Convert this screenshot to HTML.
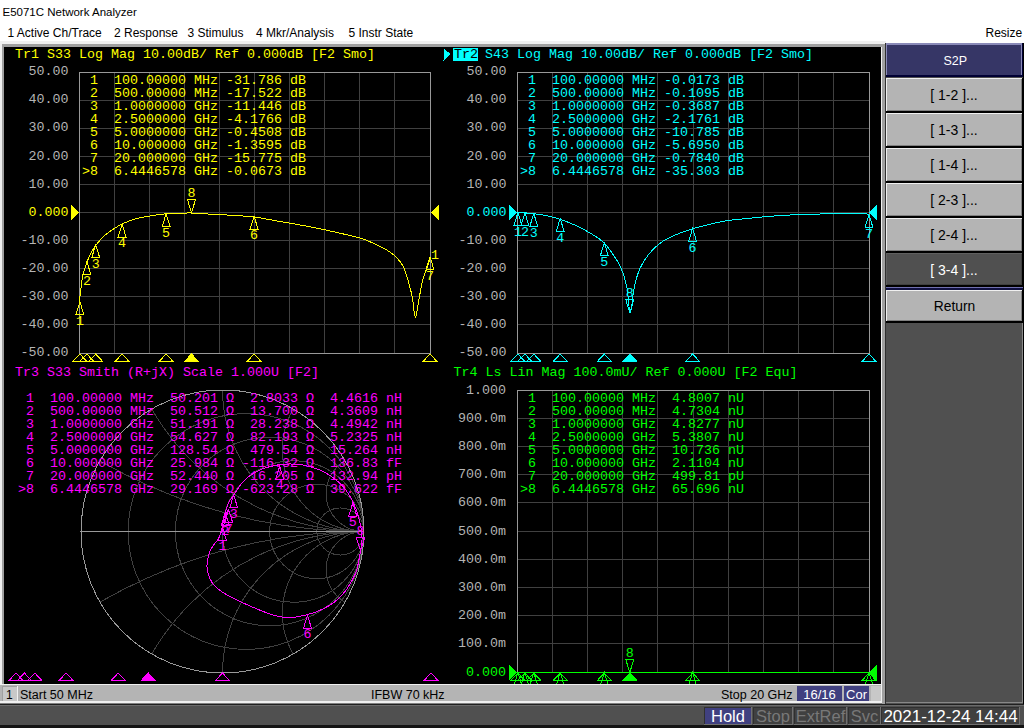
<!DOCTYPE html><html><head><meta charset="utf-8"><style>html,body{margin:0;padding:0;width:1024px;height:728px;overflow:hidden;background:#fff}svg{display:block}</style></head><body><svg width="1024" height="728" viewBox="0 0 1024 728" shape-rendering="crispEdges"><rect x="0" y="0" width="1024" height="728" fill="#ffffff"/>
<text x="2.5" y="16" font-family="Liberation Sans" font-size="11.5" fill="#000">E5071C Network Analyzer</text>
<text x="7.5" y="36.5" font-family="Liberation Sans" font-size="12" fill="#000">1 Active Ch/Trace</text>
<text x="114" y="36.5" font-family="Liberation Sans" font-size="12" fill="#000">2 Response</text>
<text x="187.5" y="36.5" font-family="Liberation Sans" font-size="12" fill="#000">3 Stimulus</text>
<text x="256" y="36.5" font-family="Liberation Sans" font-size="12" fill="#000">4 Mkr/Analysis</text>
<text x="348.5" y="36.5" font-family="Liberation Sans" font-size="12" fill="#000">5 Instr State</text>
<text x="985.5" y="36.5" font-family="Liberation Sans" font-size="12" fill="#000">Resize</text>
<rect x="0" y="41" width="886" height="663" fill="#f0f0f0"/>
<rect x="2" y="44" width="883" height="660" fill="#a0a0a0"/>
<rect x="4" y="47" width="877" height="637" fill="#000000"/>
<rect x="881" y="47" width="1" height="637" fill="#f0f0f0"/>
<rect x="885" y="41" width="1" height="663" fill="#303030"/>
<text x="15" y="58" font-family="Liberation Mono" font-size="13.33" fill="#ffff00">Tr1 S33 Log Mag 10.00dB/ Ref 0.000dB [F2 Smo]</text>
<line x1="114.5" y1="72" x2="114.5" y2="353" stroke="#404040"/>
<line x1="149.5" y1="72" x2="149.5" y2="353" stroke="#404040"/>
<line x1="184.5" y1="72" x2="184.5" y2="353" stroke="#404040"/>
<line x1="219.5" y1="72" x2="219.5" y2="353" stroke="#404040"/>
<line x1="254.5" y1="72" x2="254.5" y2="353" stroke="#404040"/>
<line x1="289.5" y1="72" x2="289.5" y2="353" stroke="#404040"/>
<line x1="324.5" y1="72" x2="324.5" y2="353" stroke="#404040"/>
<line x1="359.5" y1="72" x2="359.5" y2="353" stroke="#404040"/>
<line x1="394.5" y1="72" x2="394.5" y2="353" stroke="#404040"/>
<line x1="79" y1="100.5" x2="430" y2="100.5" stroke="#404040"/>
<line x1="79" y1="128.5" x2="430" y2="128.5" stroke="#404040"/>
<line x1="79" y1="156.5" x2="430" y2="156.5" stroke="#404040"/>
<line x1="79" y1="184.5" x2="430" y2="184.5" stroke="#404040"/>
<line x1="79" y1="212.5" x2="430" y2="212.5" stroke="#404040"/>
<line x1="79" y1="240.5" x2="430" y2="240.5" stroke="#404040"/>
<line x1="79" y1="268.5" x2="430" y2="268.5" stroke="#404040"/>
<line x1="79" y1="296.5" x2="430" y2="296.5" stroke="#404040"/>
<line x1="79" y1="324.5" x2="430" y2="324.5" stroke="#404040"/>
<rect x="79.5" y="72.5" width="351" height="281" fill="none" stroke="#999999"/>
<text x="68.5" y="75.2" font-family="Liberation Mono" font-size="13.33" fill="#b4b4b4" text-anchor="end">50.00</text>
<text x="68.5" y="103.3" font-family="Liberation Mono" font-size="13.33" fill="#b4b4b4" text-anchor="end">40.00</text>
<text x="68.5" y="131.4" font-family="Liberation Mono" font-size="13.33" fill="#b4b4b4" text-anchor="end">30.00</text>
<text x="68.5" y="159.5" font-family="Liberation Mono" font-size="13.33" fill="#b4b4b4" text-anchor="end">20.00</text>
<text x="68.5" y="187.6" font-family="Liberation Mono" font-size="13.33" fill="#b4b4b4" text-anchor="end">10.00</text>
<text x="68.5" y="215.7" font-family="Liberation Mono" font-size="13.33" fill="#ffff00" text-anchor="end">0.000</text>
<text x="68.5" y="243.8" font-family="Liberation Mono" font-size="13.33" fill="#b4b4b4" text-anchor="end">-10.00</text>
<text x="68.5" y="271.9" font-family="Liberation Mono" font-size="13.33" fill="#b4b4b4" text-anchor="end">-20.00</text>
<text x="68.5" y="300.0" font-family="Liberation Mono" font-size="13.33" fill="#b4b4b4" text-anchor="end">-30.00</text>
<text x="68.5" y="328.1" font-family="Liberation Mono" font-size="13.33" fill="#b4b4b4" text-anchor="end">-40.00</text>
<text x="68.5" y="356.2" font-family="Liberation Mono" font-size="13.33" fill="#b4b4b4" text-anchor="end">-50.00</text>
<text x="82" y="84" font-family="Liberation Mono" font-size="13.33" fill="#ffff00" xml:space="preserve"> 1  100.00000 MHz -31.786 dB</text>
<text x="82" y="97" font-family="Liberation Mono" font-size="13.33" fill="#ffff00" xml:space="preserve"> 2  500.00000 MHz -17.522 dB</text>
<text x="82" y="110" font-family="Liberation Mono" font-size="13.33" fill="#ffff00" xml:space="preserve"> 3  1.0000000 GHz -11.446 dB</text>
<text x="82" y="123" font-family="Liberation Mono" font-size="13.33" fill="#ffff00" xml:space="preserve"> 4  2.5000000 GHz -4.1766 dB</text>
<text x="82" y="136" font-family="Liberation Mono" font-size="13.33" fill="#ffff00" xml:space="preserve"> 5  5.0000000 GHz -0.4508 dB</text>
<text x="82" y="149" font-family="Liberation Mono" font-size="13.33" fill="#ffff00" xml:space="preserve"> 6  10.000000 GHz -1.3595 dB</text>
<text x="82" y="162" font-family="Liberation Mono" font-size="13.33" fill="#ffff00" xml:space="preserve"> 7  20.000000 GHz -15.775 dB</text>
<text x="82" y="175" font-family="Liberation Mono" font-size="13.33" fill="#ffff00" xml:space="preserve">&gt;8  6.4446578 GHz -0.0673 dB</text>
<path d="M79.50 303.00 C79.58 301.83 79.75 298.50 80.00 296.00 C80.25 293.50 80.67 290.67 81.00 288.00 C81.33 285.33 81.50 282.83 82.00 280.00 C82.50 277.17 83.17 274.00 84.00 271.00 C84.83 268.00 85.83 265.00 87.00 262.00 C88.17 259.00 89.50 255.83 91.00 253.00 C92.50 250.17 93.83 247.83 96.00 245.00 C98.17 242.17 101.33 238.50 104.00 236.00 C106.67 233.50 109.00 232.00 112.00 230.00 C115.00 228.00 118.17 225.83 122.00 224.00 C125.83 222.17 130.33 220.33 135.00 219.00 C139.67 217.67 144.83 216.87 150.00 216.00 C155.17 215.13 161.00 214.25 166.00 213.80 C171.00 213.35 175.75 213.43 180.00 213.30 C184.25 213.17 186.55 212.87 191.50 213.00 C196.45 213.13 203.28 213.73 209.70 214.10 C216.12 214.47 222.58 214.73 230.00 215.20 C237.42 215.67 248.20 216.27 254.20 216.90 C260.20 217.53 260.13 217.97 266.00 219.00 C271.87 220.03 281.60 221.72 289.40 223.10 C297.20 224.48 304.47 225.63 312.80 227.30 C321.13 228.97 331.37 231.27 339.40 233.10 C347.43 234.93 354.90 236.40 361.00 238.30 C367.10 240.20 371.83 242.63 376.00 244.50 C380.17 246.37 382.67 247.42 386.00 249.50 C389.33 251.58 393.08 254.08 396.00 257.00 C398.92 259.92 401.42 262.83 403.50 267.00 C405.58 271.17 407.04 277.00 408.50 282.00 C409.96 287.00 411.12 291.17 412.25 297.00 C413.38 302.83 414.21 316.17 415.25 317.00 C416.29 317.83 417.33 307.83 418.50 302.00 C419.67 296.17 420.79 287.83 422.25 282.00 C423.71 276.17 425.92 271.00 427.25 267.00 C428.58 263.00 429.75 259.50 430.25 258.00" fill="none" stroke="#ffff00"/>
<path d="M79.9 301.8 L75.9 314.8 L83.9 314.8 Z" fill="none" stroke="#ffff00"/>
<text x="79.9" y="324.8" font-family="Liberation Mono" font-size="13.33" fill="#ffff00" text-anchor="middle">1</text>
<path d="M86.9 261.7 L82.9 274.7 L90.9 274.7 Z" fill="none" stroke="#ffff00"/>
<text x="86.9" y="284.7" font-family="Liberation Mono" font-size="13.33" fill="#ffff00" text-anchor="middle">2</text>
<path d="M95.7 244.7 L91.7 257.7 L99.7 257.7 Z" fill="none" stroke="#ffff00"/>
<text x="95.7" y="267.7" font-family="Liberation Mono" font-size="13.33" fill="#ffff00" text-anchor="middle">3</text>
<path d="M122.1 224.2 L118.1 237.2 L126.1 237.2 Z" fill="none" stroke="#ffff00"/>
<text x="122.1" y="247.2" font-family="Liberation Mono" font-size="13.33" fill="#ffff00" text-anchor="middle">4</text>
<path d="M166.1 213.8 L162.1 226.8 L170.1 226.8 Z" fill="none" stroke="#ffff00"/>
<text x="166.1" y="236.8" font-family="Liberation Mono" font-size="13.33" fill="#ffff00" text-anchor="middle">5</text>
<path d="M254.1 216.3 L250.1 229.3 L258.1 229.3 Z" fill="none" stroke="#ffff00"/>
<text x="254.1" y="239.3" font-family="Liberation Mono" font-size="13.33" fill="#ffff00" text-anchor="middle">6</text>
<path d="M430.0 256.8 L426.0 269.8 L434.0 269.8 Z" fill="none" stroke="#ffff00"/>
<text x="430.0" y="279.8" font-family="Liberation Mono" font-size="13.33" fill="#ffff00" text-anchor="middle">7</text>
<path d="M191.5 212.7 L187.5 199.7 L195.5 199.7 Z" fill="none" stroke="#ffff00"/>
<text x="191.5" y="196.7" font-family="Liberation Mono" font-size="13.33" fill="#ffff00" text-anchor="middle">8</text>
<text x="435" y="259" font-family="Liberation Mono" font-size="13.33" fill="#ffff00" text-anchor="middle">1</text>
<path d="M79.9 354.0 L72.9 361.5 L86.9 361.5 Z" fill="none" stroke="#ffff00"/>
<path d="M86.9 354.0 L79.9 361.5 L93.9 361.5 Z" fill="none" stroke="#ffff00"/>
<path d="M95.7 354.0 L88.7 361.5 L102.7 361.5 Z" fill="none" stroke="#ffff00"/>
<path d="M122.1 354.0 L115.1 361.5 L129.1 361.5 Z" fill="none" stroke="#ffff00"/>
<path d="M166.1 354.0 L159.1 361.5 L173.1 361.5 Z" fill="none" stroke="#ffff00"/>
<path d="M254.1 354.0 L247.1 361.5 L261.1 361.5 Z" fill="none" stroke="#ffff00"/>
<path d="M430.0 354.0 L423.0 361.5 L437.0 361.5 Z" fill="none" stroke="#ffff00"/>
<path d="M191.5 354.0 L184.5 361.5 L198.5 361.5 Z" fill="#ffff00" stroke="#ffff00"/>
<path d="M79 212.5 L71 205.0 L71 220.0 Z" fill="#ffff00"/>
<path d="M431 212.5 L439 205.0 L439 220.0 Z" fill="#ffff00"/>
<path d="M443.5 48 L450.5 54.2 L443.5 60.5 Z" fill="#00ffff"/>
<rect x="453" y="48" width="25" height="13" fill="#00ffff"/>
<text x="454" y="58" font-family="Liberation Mono" font-size="13.33" fill="#000">Tr2</text>
<text x="485" y="58" font-family="Liberation Mono" font-size="13.33" fill="#00ffff">S43 Log Mag 10.00dB/ Ref 0.000dB [F2 Smo]</text>
<line x1="552.5" y1="72" x2="552.5" y2="353" stroke="#404040"/>
<line x1="587.5" y1="72" x2="587.5" y2="353" stroke="#404040"/>
<line x1="622.5" y1="72" x2="622.5" y2="353" stroke="#404040"/>
<line x1="657.5" y1="72" x2="657.5" y2="353" stroke="#404040"/>
<line x1="693.5" y1="72" x2="693.5" y2="353" stroke="#404040"/>
<line x1="728.5" y1="72" x2="728.5" y2="353" stroke="#404040"/>
<line x1="763.5" y1="72" x2="763.5" y2="353" stroke="#404040"/>
<line x1="798.5" y1="72" x2="798.5" y2="353" stroke="#404040"/>
<line x1="833.5" y1="72" x2="833.5" y2="353" stroke="#404040"/>
<line x1="517" y1="100.5" x2="869" y2="100.5" stroke="#404040"/>
<line x1="517" y1="128.5" x2="869" y2="128.5" stroke="#404040"/>
<line x1="517" y1="156.5" x2="869" y2="156.5" stroke="#404040"/>
<line x1="517" y1="184.5" x2="869" y2="184.5" stroke="#404040"/>
<line x1="517" y1="212.5" x2="869" y2="212.5" stroke="#404040"/>
<line x1="517" y1="240.5" x2="869" y2="240.5" stroke="#404040"/>
<line x1="517" y1="268.5" x2="869" y2="268.5" stroke="#404040"/>
<line x1="517" y1="296.5" x2="869" y2="296.5" stroke="#404040"/>
<line x1="517" y1="324.5" x2="869" y2="324.5" stroke="#404040"/>
<rect x="517.5" y="72.5" width="352" height="281" fill="none" stroke="#999999"/>
<text x="506.5" y="75.2" font-family="Liberation Mono" font-size="13.33" fill="#b4b4b4" text-anchor="end">50.00</text>
<text x="506.5" y="103.3" font-family="Liberation Mono" font-size="13.33" fill="#b4b4b4" text-anchor="end">40.00</text>
<text x="506.5" y="131.4" font-family="Liberation Mono" font-size="13.33" fill="#b4b4b4" text-anchor="end">30.00</text>
<text x="506.5" y="159.5" font-family="Liberation Mono" font-size="13.33" fill="#b4b4b4" text-anchor="end">20.00</text>
<text x="506.5" y="187.6" font-family="Liberation Mono" font-size="13.33" fill="#b4b4b4" text-anchor="end">10.00</text>
<text x="506.5" y="215.7" font-family="Liberation Mono" font-size="13.33" fill="#00ffff" text-anchor="end">0.000</text>
<text x="506.5" y="243.8" font-family="Liberation Mono" font-size="13.33" fill="#b4b4b4" text-anchor="end">-10.00</text>
<text x="506.5" y="271.9" font-family="Liberation Mono" font-size="13.33" fill="#b4b4b4" text-anchor="end">-20.00</text>
<text x="506.5" y="300.0" font-family="Liberation Mono" font-size="13.33" fill="#b4b4b4" text-anchor="end">-30.00</text>
<text x="506.5" y="328.1" font-family="Liberation Mono" font-size="13.33" fill="#b4b4b4" text-anchor="end">-40.00</text>
<text x="506.5" y="356.2" font-family="Liberation Mono" font-size="13.33" fill="#b4b4b4" text-anchor="end">-50.00</text>
<text x="520" y="84" font-family="Liberation Mono" font-size="13.33" fill="#00ffff" xml:space="preserve"> 1  100.00000 MHz -0.0173 dB</text>
<text x="520" y="97" font-family="Liberation Mono" font-size="13.33" fill="#00ffff" xml:space="preserve"> 2  500.00000 MHz -0.1095 dB</text>
<text x="520" y="110" font-family="Liberation Mono" font-size="13.33" fill="#00ffff" xml:space="preserve"> 3  1.0000000 GHz -0.3687 dB</text>
<text x="520" y="123" font-family="Liberation Mono" font-size="13.33" fill="#00ffff" xml:space="preserve"> 4  2.5000000 GHz -2.1761 dB</text>
<text x="520" y="136" font-family="Liberation Mono" font-size="13.33" fill="#00ffff" xml:space="preserve"> 5  5.0000000 GHz -10.785 dB</text>
<text x="520" y="149" font-family="Liberation Mono" font-size="13.33" fill="#00ffff" xml:space="preserve"> 6  10.000000 GHz -5.6950 dB</text>
<text x="520" y="162" font-family="Liberation Mono" font-size="13.33" fill="#00ffff" xml:space="preserve"> 7  20.000000 GHz -0.7840 dB</text>
<text x="520" y="175" font-family="Liberation Mono" font-size="13.33" fill="#00ffff" xml:space="preserve">&gt;8  6.4446578 GHz -35.303 dB</text>
<path d="M517.00 212.50 C519.17 212.63 524.98 212.75 530.00 213.30 C535.02 213.85 541.15 214.47 547.10 215.80 C553.05 217.13 559.52 218.98 565.70 221.30 C571.88 223.62 578.02 226.30 584.20 229.70 C590.38 233.10 597.85 237.37 602.80 241.70 C607.75 246.03 610.82 251.22 613.90 255.70 C616.98 260.18 619.13 263.35 621.30 268.60 C623.47 273.85 625.42 279.80 626.90 287.20 C628.38 294.60 628.97 313.00 630.20 313.00 C631.43 313.00 632.68 294.60 634.30 287.20 C635.92 279.80 637.43 274.17 639.90 268.60 C642.37 263.03 645.40 258.28 649.10 253.80 C652.80 249.32 657.45 244.95 662.10 241.70 C666.75 238.45 671.90 236.45 677.00 234.30 C682.10 232.15 687.28 230.47 692.70 228.80 C698.12 227.13 703.45 225.70 709.50 224.30 C715.55 222.90 722.48 221.38 729.00 220.40 C735.52 219.42 742.10 219.05 748.60 218.40 C755.10 217.75 761.48 217.05 768.00 216.50 C774.52 215.95 781.20 215.43 787.70 215.10 C794.20 214.77 799.20 214.75 807.00 214.50 C814.80 214.25 825.03 213.75 834.50 213.60 C843.97 213.45 858.05 213.37 863.80 213.60 C869.55 213.83 868.13 214.77 869.00 215.00" fill="none" stroke="#00ffff"/>
<path d="M517.9 212.6 L513.9 225.6 L521.9 225.6 Z" fill="none" stroke="#00ffff"/>
<text x="517.9" y="235.6" font-family="Liberation Mono" font-size="13.33" fill="#00ffff" text-anchor="middle">1</text>
<path d="M524.9 212.8 L520.9 225.8 L528.9 225.8 Z" fill="none" stroke="#00ffff"/>
<text x="524.9" y="235.8" font-family="Liberation Mono" font-size="13.33" fill="#00ffff" text-anchor="middle">2</text>
<path d="M533.8 213.5 L529.8 226.5 L537.8 226.5 Z" fill="none" stroke="#00ffff"/>
<text x="533.8" y="236.5" font-family="Liberation Mono" font-size="13.33" fill="#00ffff" text-anchor="middle">3</text>
<path d="M560.2 218.6 L556.2 231.6 L564.2 231.6 Z" fill="none" stroke="#00ffff"/>
<text x="560.2" y="241.6" font-family="Liberation Mono" font-size="13.33" fill="#00ffff" text-anchor="middle">4</text>
<path d="M604.3 242.8 L600.3 255.8 L608.3 255.8 Z" fill="none" stroke="#00ffff"/>
<text x="604.3" y="265.8" font-family="Liberation Mono" font-size="13.33" fill="#00ffff" text-anchor="middle">5</text>
<path d="M692.6 228.5 L688.6 241.5 L696.6 241.5 Z" fill="none" stroke="#00ffff"/>
<text x="692.6" y="251.5" font-family="Liberation Mono" font-size="13.33" fill="#00ffff" text-anchor="middle">6</text>
<path d="M869.0 214.7 L865.0 227.7 L873.0 227.7 Z" fill="none" stroke="#00ffff"/>
<text x="869.0" y="237.7" font-family="Liberation Mono" font-size="13.33" fill="#00ffff" text-anchor="middle">7</text>
<path d="M629.8 312.7 L625.8 299.7 L633.8 299.7 Z" fill="none" stroke="#00ffff"/>
<text x="629.8" y="296.7" font-family="Liberation Mono" font-size="13.33" fill="#00ffff" text-anchor="middle">8</text>
<path d="M517.9 354.0 L510.9 361.5 L524.9 361.5 Z" fill="none" stroke="#00ffff"/>
<path d="M524.9 354.0 L517.9 361.5 L531.9 361.5 Z" fill="none" stroke="#00ffff"/>
<path d="M533.8 354.0 L526.8 361.5 L540.8 361.5 Z" fill="none" stroke="#00ffff"/>
<path d="M560.2 354.0 L553.2 361.5 L567.2 361.5 Z" fill="none" stroke="#00ffff"/>
<path d="M604.3 354.0 L597.3 361.5 L611.3 361.5 Z" fill="none" stroke="#00ffff"/>
<path d="M692.6 354.0 L685.6 361.5 L699.6 361.5 Z" fill="none" stroke="#00ffff"/>
<path d="M869.0 354.0 L862.0 361.5 L876.0 361.5 Z" fill="none" stroke="#00ffff"/>
<path d="M629.8 354.0 L622.8 361.5 L636.8 361.5 Z" fill="#00ffff" stroke="#00ffff"/>
<path d="M517 212.5 L509 205.0 L509 220.0 Z" fill="#00ffff"/>
<path d="M869 212.5 L877 205.0 L877 220.0 Z" fill="#00ffff"/>
<text x="15" y="376" font-family="Liberation Mono" font-size="13.33" fill="#ff00ff">Tr3 S33 Smith (R+jX) Scale 1.000U [F2]</text>
<clipPath id="sc"><circle cx="222.5" cy="531.5" r="141.5"/></clipPath>
<g clip-path="url(#sc)" fill="none" stroke="#404040">
<circle cx="246.08" cy="531.5" r="117.92"/>
<circle cx="269.67" cy="531.5" r="94.33"/>
<circle cx="293.25" cy="531.5" r="70.75"/>
<circle cx="316.83" cy="531.5" r="47.17"/>
<circle cx="340.42" cy="531.5" r="23.58"/>
<circle cx="364.00" cy="3.41" r="528.09"/>
<circle cx="364.00" cy="1059.59" r="528.09"/>
<circle cx="364.00" cy="286.41" r="245.09"/>
<circle cx="364.00" cy="776.59" r="245.09"/>
<circle cx="364.00" cy="390.00" r="141.50"/>
<circle cx="364.00" cy="673.00" r="141.50"/>
<circle cx="364.00" cy="449.80" r="81.70"/>
<circle cx="364.00" cy="613.20" r="81.70"/>
<circle cx="364.00" cy="493.59" r="37.91"/>
<circle cx="364.00" cy="569.41" r="37.91"/>
</g>
<circle cx="222.5" cy="531.5" r="141.5" fill="none" stroke="#999999"/>
<line x1="81.0" y1="531.5" x2="364.0" y2="531.5" stroke="#999999"/>
<text x="18" y="402" font-family="Liberation Mono" font-size="13.33" fill="#ff00ff" xml:space="preserve"> 1  100.00000 MHz  50.201 Ω  2.8033 Ω  4.4616 nH</text>
<text x="18" y="415" font-family="Liberation Mono" font-size="13.33" fill="#ff00ff" xml:space="preserve"> 2  500.00000 MHz  50.512 Ω  13.700 Ω  4.3609 nH</text>
<text x="18" y="428" font-family="Liberation Mono" font-size="13.33" fill="#ff00ff" xml:space="preserve"> 3  1.0000000 GHz  51.191 Ω  28.238 Ω  4.4942 nH</text>
<text x="18" y="441" font-family="Liberation Mono" font-size="13.33" fill="#ff00ff" xml:space="preserve"> 4  2.5000000 GHz  54.627 Ω  82.193 Ω  5.2325 nH</text>
<text x="18" y="454" font-family="Liberation Mono" font-size="13.33" fill="#ff00ff" xml:space="preserve"> 5  5.0000000 GHz  128.54 Ω  479.54 Ω  15.264 nH</text>
<text x="18" y="467" font-family="Liberation Mono" font-size="13.33" fill="#ff00ff" xml:space="preserve"> 6  10.000000 GHz  25.984 Ω -116.32 Ω  136.83 fF</text>
<text x="18" y="480" font-family="Liberation Mono" font-size="13.33" fill="#ff00ff" xml:space="preserve"> 7  20.000000 GHz  52.440 Ω  16.205 Ω  132.94 pH</text>
<text x="18" y="493" font-family="Liberation Mono" font-size="13.33" fill="#ff00ff" xml:space="preserve">&gt;8  6.4446578 GHz  29.169 Ω -623.28 Ω  39.622 fF</text>
<path d="M222.20 532.00 C222.23 531.18 221.88 530.40 222.40 527.10 C222.92 523.80 224.20 516.38 225.30 512.20 C226.40 508.02 227.60 504.88 229.00 502.00 C230.40 499.12 231.33 498.30 233.70 494.90 C236.07 491.50 239.68 485.35 243.20 481.60 C246.72 477.85 250.37 474.90 254.80 472.40 C259.23 469.90 264.53 467.98 269.80 466.60 C275.07 465.22 280.87 464.37 286.40 464.10 C291.93 463.83 297.47 464.03 303.00 465.00 C308.53 465.97 314.62 467.83 319.60 469.90 C324.58 471.97 328.75 474.35 332.90 477.40 C337.05 480.45 341.18 484.18 344.50 488.20 C347.82 492.22 350.58 497.07 352.80 501.50 C355.02 505.93 356.42 510.37 357.80 514.80 C359.18 519.23 360.40 523.95 361.10 528.10 C361.80 532.25 362.10 535.90 362.00 539.70 C361.90 543.50 361.05 547.32 360.50 550.90 C359.95 554.48 359.45 557.65 358.70 561.20 C357.95 564.75 357.37 568.53 356.00 572.20 C354.63 575.87 352.33 579.98 350.50 583.20 C348.67 586.42 347.07 588.87 345.00 591.50 C342.93 594.13 340.62 596.72 338.10 599.00 C335.58 601.28 333.33 603.13 329.90 605.20 C326.47 607.27 321.40 609.80 317.50 611.40 C313.60 613.00 310.46 613.82 306.50 614.80 C302.54 615.78 297.96 616.95 293.75 617.30 C289.54 617.65 285.16 617.42 281.25 616.90 C277.34 616.38 274.73 615.68 270.30 614.20 C265.88 612.72 259.92 610.20 254.70 608.00 C249.48 605.80 243.68 603.22 239.00 601.00 C234.32 598.78 230.50 597.05 226.60 594.70 C222.70 592.35 218.47 589.77 215.60 586.90 C212.73 584.03 210.83 580.88 209.40 577.50 C207.97 574.12 207.13 570.35 207.00 566.60 C206.87 562.85 207.68 558.35 208.60 555.00 C209.52 551.65 210.85 549.25 212.50 546.50 C214.15 543.75 216.70 541.85 218.50 538.50 C220.30 535.15 221.95 530.63 223.30 526.40 C224.65 522.17 225.70 515.87 226.60 513.10 C227.50 510.33 228.35 510.35 228.70 509.80" fill="none" stroke="#ff00ff"/>
<path d="M222.4 527.1 L218.4 540.1 L226.4 540.1 Z" fill="none" stroke="#ff00ff"/>
<text x="222.4" y="550.1" font-family="Liberation Mono" font-size="13.33" fill="#ff00ff" text-anchor="middle">1</text>
<path d="M225.3 512.2 L221.3 525.2 L229.3 525.2 Z" fill="none" stroke="#ff00ff"/>
<text x="225.3" y="535.2" font-family="Liberation Mono" font-size="13.33" fill="#ff00ff" text-anchor="middle">2</text>
<path d="M233.7 494.9 L229.7 507.9 L237.7 507.9 Z" fill="none" stroke="#ff00ff"/>
<text x="233.7" y="517.9" font-family="Liberation Mono" font-size="13.33" fill="#ff00ff" text-anchor="middle">3</text>
<path d="M279.7 466.3 L275.7 479.3 L283.7 479.3 Z" fill="none" stroke="#ff00ff"/>
<text x="279.7" y="489.3" font-family="Liberation Mono" font-size="13.33" fill="#ff00ff" text-anchor="middle">4</text>
<path d="M352.8 503.0 L348.8 516.0 L356.8 516.0 Z" fill="none" stroke="#ff00ff"/>
<text x="352.8" y="526" font-family="Liberation Mono" font-size="13.33" fill="#ff00ff" text-anchor="middle">5</text>
<path d="M307.5 615.3 L303.5 628.3 L311.5 628.3 Z" fill="none" stroke="#ff00ff"/>
<text x="307.5" y="638.3" font-family="Liberation Mono" font-size="13.33" fill="#ff00ff" text-anchor="middle">6</text>
<path d="M228.7 509.8 L224.7 522.8 L232.7 522.8 Z" fill="none" stroke="#ff00ff"/>
<text x="228.7" y="532.8" font-family="Liberation Mono" font-size="13.33" fill="#ff00ff" text-anchor="middle">7</text>
<path d="M360.5 550.9 L356.5 537.9 L364.5 537.9 Z" fill="none" stroke="#ff00ff"/>
<text x="360.5" y="534.9" font-family="Liberation Mono" font-size="13.33" fill="#ff00ff" text-anchor="middle">8</text>
<path d="M16.0 673.0 L9.0 680.5 L23.0 680.5 Z" fill="none" stroke="#ff00ff"/>
<path d="M24.4 673.0 L17.4 680.5 L31.4 680.5 Z" fill="none" stroke="#ff00ff"/>
<path d="M34.8 673.0 L27.8 680.5 L41.8 680.5 Z" fill="none" stroke="#ff00ff"/>
<path d="M66.1 673.0 L59.1 680.5 L73.1 680.5 Z" fill="none" stroke="#ff00ff"/>
<path d="M118.2 673.0 L111.2 680.5 L125.2 680.5 Z" fill="none" stroke="#ff00ff"/>
<path d="M222.5 673.0 L215.5 680.5 L229.5 680.5 Z" fill="none" stroke="#ff00ff"/>
<path d="M431.0 673.0 L424.0 680.5 L438.0 680.5 Z" fill="none" stroke="#ff00ff"/>
<path d="M148.3 673.0 L141.3 680.5 L155.3 680.5 Z" fill="#ff00ff" stroke="#ff00ff"/>
<text x="15" y="376" font-family="Liberation Mono" font-size="13.33" fill="#000"></text>
<text x="453.5" y="376" font-family="Liberation Mono" font-size="13.33" fill="#00ff00">Tr4 Ls Lin Mag 100.0mU/ Ref 0.000U [F2 Equ]</text>
<line x1="552.5" y1="390" x2="552.5" y2="672" stroke="#404040"/>
<line x1="587.5" y1="390" x2="587.5" y2="672" stroke="#404040"/>
<line x1="622.5" y1="390" x2="622.5" y2="672" stroke="#404040"/>
<line x1="657.5" y1="390" x2="657.5" y2="672" stroke="#404040"/>
<line x1="693.5" y1="390" x2="693.5" y2="672" stroke="#404040"/>
<line x1="728.5" y1="390" x2="728.5" y2="672" stroke="#404040"/>
<line x1="763.5" y1="390" x2="763.5" y2="672" stroke="#404040"/>
<line x1="798.5" y1="390" x2="798.5" y2="672" stroke="#404040"/>
<line x1="833.5" y1="390" x2="833.5" y2="672" stroke="#404040"/>
<line x1="517" y1="418.5" x2="869" y2="418.5" stroke="#404040"/>
<line x1="517" y1="446.5" x2="869" y2="446.5" stroke="#404040"/>
<line x1="517" y1="474.5" x2="869" y2="474.5" stroke="#404040"/>
<line x1="517" y1="502.5" x2="869" y2="502.5" stroke="#404040"/>
<line x1="517" y1="531.5" x2="869" y2="531.5" stroke="#404040"/>
<line x1="517" y1="559.5" x2="869" y2="559.5" stroke="#404040"/>
<line x1="517" y1="587.5" x2="869" y2="587.5" stroke="#404040"/>
<line x1="517" y1="615.5" x2="869" y2="615.5" stroke="#404040"/>
<line x1="517" y1="643.5" x2="869" y2="643.5" stroke="#404040"/>
<rect x="517.5" y="390.5" width="352" height="282" fill="none" stroke="#999999"/>
<text x="506" y="393.5" font-family="Liberation Mono" font-size="13.33" fill="#b4b4b4" text-anchor="end">1.000</text>
<text x="506" y="421.7" font-family="Liberation Mono" font-size="13.33" fill="#b4b4b4" text-anchor="end">900.0m</text>
<text x="506" y="449.9" font-family="Liberation Mono" font-size="13.33" fill="#b4b4b4" text-anchor="end">800.0m</text>
<text x="506" y="478.1" font-family="Liberation Mono" font-size="13.33" fill="#b4b4b4" text-anchor="end">700.0m</text>
<text x="506" y="506.3" font-family="Liberation Mono" font-size="13.33" fill="#b4b4b4" text-anchor="end">600.0m</text>
<text x="506" y="534.5" font-family="Liberation Mono" font-size="13.33" fill="#b4b4b4" text-anchor="end">500.0m</text>
<text x="506" y="562.7" font-family="Liberation Mono" font-size="13.33" fill="#b4b4b4" text-anchor="end">400.0m</text>
<text x="506" y="590.9" font-family="Liberation Mono" font-size="13.33" fill="#b4b4b4" text-anchor="end">300.0m</text>
<text x="506" y="619.1" font-family="Liberation Mono" font-size="13.33" fill="#b4b4b4" text-anchor="end">200.0m</text>
<text x="506" y="647.3" font-family="Liberation Mono" font-size="13.33" fill="#b4b4b4" text-anchor="end">100.0m</text>
<text x="506" y="675.5" font-family="Liberation Mono" font-size="13.33" fill="#00ff00" text-anchor="end">0.000</text>
<text x="520" y="402" font-family="Liberation Mono" font-size="13.33" fill="#00ff00" xml:space="preserve"> 1  100.00000 MHz  4.8007 nU</text>
<text x="520" y="415" font-family="Liberation Mono" font-size="13.33" fill="#00ff00" xml:space="preserve"> 2  500.00000 MHz  4.7304 nU</text>
<text x="520" y="428" font-family="Liberation Mono" font-size="13.33" fill="#00ff00" xml:space="preserve"> 3  1.0000000 GHz  4.8277 nU</text>
<text x="520" y="441" font-family="Liberation Mono" font-size="13.33" fill="#00ff00" xml:space="preserve"> 4  2.5000000 GHz  5.3807 nU</text>
<text x="520" y="454" font-family="Liberation Mono" font-size="13.33" fill="#00ff00" xml:space="preserve"> 5  5.0000000 GHz  10.736 nU</text>
<text x="520" y="467" font-family="Liberation Mono" font-size="13.33" fill="#00ff00" xml:space="preserve"> 6  10.000000 GHz  2.1104 nU</text>
<text x="520" y="480" font-family="Liberation Mono" font-size="13.33" fill="#00ff00" xml:space="preserve"> 7  20.000000 GHz  499.81 pU</text>
<text x="520" y="493" font-family="Liberation Mono" font-size="13.33" fill="#00ff00" xml:space="preserve">&gt;8  6.4446578 GHz  65.696 nU</text>
<line x1="517" y1="672.5" x2="869" y2="672.5" stroke="#00ff00"/>
<path d="M517.9 672.5 L513.9 685.5 L521.9 685.5 Z" fill="none" stroke="#00ff00"/>
<text x="517.9" y="695.5" font-family="Liberation Mono" font-size="13.33" fill="#00ff00" text-anchor="middle"></text>
<path d="M524.9 672.5 L520.9 685.5 L528.9 685.5 Z" fill="none" stroke="#00ff00"/>
<text x="524.9" y="695.5" font-family="Liberation Mono" font-size="13.33" fill="#00ff00" text-anchor="middle"></text>
<path d="M533.8 672.5 L529.8 685.5 L537.8 685.5 Z" fill="none" stroke="#00ff00"/>
<text x="533.8" y="695.5" font-family="Liberation Mono" font-size="13.33" fill="#00ff00" text-anchor="middle"></text>
<path d="M560.2 672.5 L556.2 685.5 L564.2 685.5 Z" fill="none" stroke="#00ff00"/>
<text x="560.2" y="695.5" font-family="Liberation Mono" font-size="13.33" fill="#00ff00" text-anchor="middle"></text>
<path d="M604.3 672.5 L600.3 685.5 L608.3 685.5 Z" fill="none" stroke="#00ff00"/>
<text x="604.3" y="695.5" font-family="Liberation Mono" font-size="13.33" fill="#00ff00" text-anchor="middle"></text>
<path d="M692.6 672.5 L688.6 685.5 L696.6 685.5 Z" fill="none" stroke="#00ff00"/>
<text x="692.6" y="695.5" font-family="Liberation Mono" font-size="13.33" fill="#00ff00" text-anchor="middle"></text>
<path d="M869.0 672.5 L865.0 685.5 L873.0 685.5 Z" fill="none" stroke="#00ff00"/>
<text x="869.0" y="695.5" font-family="Liberation Mono" font-size="13.33" fill="#00ff00" text-anchor="middle"></text>
<path d="M629.8 672.5 L625.8 659.5 L633.8 659.5 Z" fill="none" stroke="#00ff00"/>
<text x="629.8" y="656.5" font-family="Liberation Mono" font-size="13.33" fill="#00ff00" text-anchor="middle">8</text>
<path d="M517.9 673.0 L510.9 680.5 L524.9 680.5 Z" fill="none" stroke="#00ff00"/>
<path d="M524.9 673.0 L517.9 680.5 L531.9 680.5 Z" fill="none" stroke="#00ff00"/>
<path d="M533.8 673.0 L526.8 680.5 L540.8 680.5 Z" fill="none" stroke="#00ff00"/>
<path d="M560.2 673.0 L553.2 680.5 L567.2 680.5 Z" fill="none" stroke="#00ff00"/>
<path d="M604.3 673.0 L597.3 680.5 L611.3 680.5 Z" fill="none" stroke="#00ff00"/>
<path d="M692.6 673.0 L685.6 680.5 L699.6 680.5 Z" fill="none" stroke="#00ff00"/>
<path d="M869.0 673.0 L862.0 680.5 L876.0 680.5 Z" fill="none" stroke="#00ff00"/>
<path d="M629.8 673.0 L622.8 680.5 L636.8 680.5 Z" fill="#00ff00" stroke="#00ff00"/>
<path d="M517 672.5 L509 665.0 L509 680.0 Z" fill="#00ff00"/>
<path d="M869 672.5 L877 665.0 L877 680.0 Z" fill="#00ff00"/>
<rect x="0" y="684" width="882" height="20" fill="#f0f0f0"/>
<rect x="0" y="685" width="881" height="16" fill="#b4b4b4"/>
<rect x="0" y="703" width="882" height="1" fill="#808080"/>
<rect x="882" y="47" width="3" height="657" fill="#a0a0a0"/>
<rect x="885" y="43" width="1" height="661" fill="#303030"/>
<rect x="2" y="686" width="16" height="16" fill="#f0f0f0"/>
<rect x="2" y="686" width="15" height="15" fill="#a0a0a0"/>
<rect x="3" y="687" width="14" height="14" fill="#c8c8c8"/>
<text x="6" y="698.5" font-family="Liberation Sans" font-size="12" fill="#000">1</text>
<text x="20" y="698.5" font-family="Liberation Sans" font-size="12.5" fill="#000">Start 50 MHz</text>
<text x="371" y="698.5" font-family="Liberation Sans" font-size="12.5" fill="#000">IFBW 70 kHz</text>
<text x="721" y="698.5" font-family="Liberation Sans" font-size="12.5" fill="#000">Stop 20 GHz</text>
<rect x="797" y="686" width="45" height="15" fill="#404080"/>
<text x="819.5" y="699" font-family="Liberation Sans" font-size="13" fill="#fff" text-anchor="middle">16/16</text>
<rect x="844" y="686" width="25" height="15" fill="#404080"/>
<text x="856.5" y="699" font-family="Liberation Sans" font-size="13" fill="#fff" text-anchor="middle">Cor</text>
<rect x="871" y="686" width="10" height="15" fill="#c8c8c8"/>
<rect x="886" y="43" width="138" height="661" fill="#505050"/>
<rect x="885" y="41" width="1" height="2" fill="#f0f0f0"/>
<rect x="886" y="43" width="138" height="34" fill="#000033"/>
<rect x="886" y="43" width="136" height="32" fill="#8a8ab8"/>
<rect x="887" y="45" width="134" height="30" fill="#363666"/>
<text x="955.3" y="65" font-family="Liberation Sans" font-size="12.5" fill="#fff" text-anchor="middle">S2P</text>
<rect x="886" y="78" width="138" height="35" fill="#000000"/>
<rect x="886" y="78" width="136" height="33" fill="#f0f0f0"/>
<rect x="887" y="79" width="135" height="32" fill="#808080"/>
<rect x="887" y="79" width="134" height="31" fill="#b4b4b4"/>
<text x="954" y="99.7" font-family="Liberation Sans" font-size="14" fill="#000" text-anchor="middle">[ 1-2 ]...</text>
<rect x="886" y="113" width="138" height="35" fill="#000000"/>
<rect x="886" y="113" width="136" height="33" fill="#f0f0f0"/>
<rect x="887" y="114" width="135" height="32" fill="#808080"/>
<rect x="887" y="114" width="134" height="31" fill="#b4b4b4"/>
<text x="954" y="134.7" font-family="Liberation Sans" font-size="14" fill="#000" text-anchor="middle">[ 1-3 ]...</text>
<rect x="886" y="148" width="138" height="35" fill="#000000"/>
<rect x="886" y="148" width="136" height="33" fill="#f0f0f0"/>
<rect x="887" y="149" width="135" height="32" fill="#808080"/>
<rect x="887" y="149" width="134" height="31" fill="#b4b4b4"/>
<text x="954" y="169.7" font-family="Liberation Sans" font-size="14" fill="#000" text-anchor="middle">[ 1-4 ]...</text>
<rect x="886" y="183" width="138" height="35" fill="#000000"/>
<rect x="886" y="183" width="136" height="33" fill="#f0f0f0"/>
<rect x="887" y="184" width="135" height="32" fill="#808080"/>
<rect x="887" y="184" width="134" height="31" fill="#b4b4b4"/>
<text x="954" y="204.7" font-family="Liberation Sans" font-size="14" fill="#000" text-anchor="middle">[ 2-3 ]...</text>
<rect x="886" y="218" width="138" height="35" fill="#000000"/>
<rect x="886" y="218" width="136" height="33" fill="#f0f0f0"/>
<rect x="887" y="219" width="135" height="32" fill="#808080"/>
<rect x="887" y="219" width="134" height="31" fill="#b4b4b4"/>
<text x="954" y="239.7" font-family="Liberation Sans" font-size="14" fill="#000" text-anchor="middle">[ 2-4 ]...</text>
<rect x="886" y="253" width="138" height="34" fill="#000000"/>
<rect x="886" y="253" width="136" height="32" fill="#606060"/>
<rect x="887" y="254" width="135" height="31" fill="#404040"/>
<rect x="887" y="254" width="134" height="30" fill="#505050"/>
<text x="954" y="274.7" font-family="Liberation Sans" font-size="14" fill="#fff" text-anchor="middle">[ 3-4 ]...</text>
<rect x="886" y="287" width="138" height="1" fill="#7070b0"/>
<rect x="886" y="288" width="138" height="2" fill="#101040"/>
<rect x="886" y="290" width="138" height="33" fill="#000000"/>
<rect x="886" y="290" width="136" height="31" fill="#f0f0f0"/>
<rect x="887" y="291" width="135" height="30" fill="#808080"/>
<rect x="887" y="291" width="134" height="29" fill="#b4b4b4"/>
<text x="954.5" y="310.5" font-family="Liberation Sans" font-size="13.8" fill="#000" text-anchor="middle">Return</text>
<rect x="1022" y="323" width="1" height="380" fill="#888888"/>
<rect x="1023" y="43" width="1" height="661" fill="#000000"/>
<rect x="886" y="702" width="137" height="1" fill="#888888"/>
<rect x="0" y="704" width="1024" height="24" fill="#505050"/>
<rect x="0" y="704" width="1024" height="1" fill="#202020"/>
<rect x="0" y="705" width="1024" height="1" fill="#6a6a6a"/>
<rect x="0" y="725" width="1024" height="3" fill="#141414"/>
<rect x="704" y="707" width="48" height="18" fill="#707070"/>
<rect x="704" y="707" width="47" height="17" fill="#303030"/>
<rect x="705" y="708" width="46" height="16" fill="#404080"/>
<text x="728.0" y="721.5" font-family="Liberation Sans" font-size="16.5" fill="#fff" text-anchor="middle">Hold</text>
<rect x="753" y="707" width="40" height="18" fill="#707070"/>
<rect x="753" y="707" width="39" height="17" fill="#303030"/>
<rect x="754" y="708" width="38" height="16" fill="#404040"/>
<text x="773.0" y="721.5" font-family="Liberation Sans" font-size="16.5" fill="#787878" text-anchor="middle">Stop</text>
<rect x="794" y="707" width="53" height="18" fill="#707070"/>
<rect x="794" y="707" width="52" height="17" fill="#303030"/>
<rect x="795" y="708" width="51" height="16" fill="#404040"/>
<text x="820.5" y="721.5" font-family="Liberation Sans" font-size="16.5" fill="#787878" text-anchor="middle">ExtRef</text>
<rect x="848" y="707" width="33" height="18" fill="#707070"/>
<rect x="848" y="707" width="32" height="17" fill="#303030"/>
<rect x="849" y="708" width="31" height="16" fill="#404040"/>
<text x="864.5" y="721.5" font-family="Liberation Sans" font-size="16.5" fill="#787878" text-anchor="middle">Svc</text>
<rect x="881" y="707" width="139" height="18" fill="#707070"/>
<rect x="881" y="707" width="138" height="17" fill="#303030"/>
<rect x="882" y="708" width="137" height="16" fill="#404040"/>
<text x="950.5" y="722" font-family="Liberation Sans" font-size="17" fill="#fff" text-anchor="middle">2021-12-24 14:44</text></svg></body></html>
